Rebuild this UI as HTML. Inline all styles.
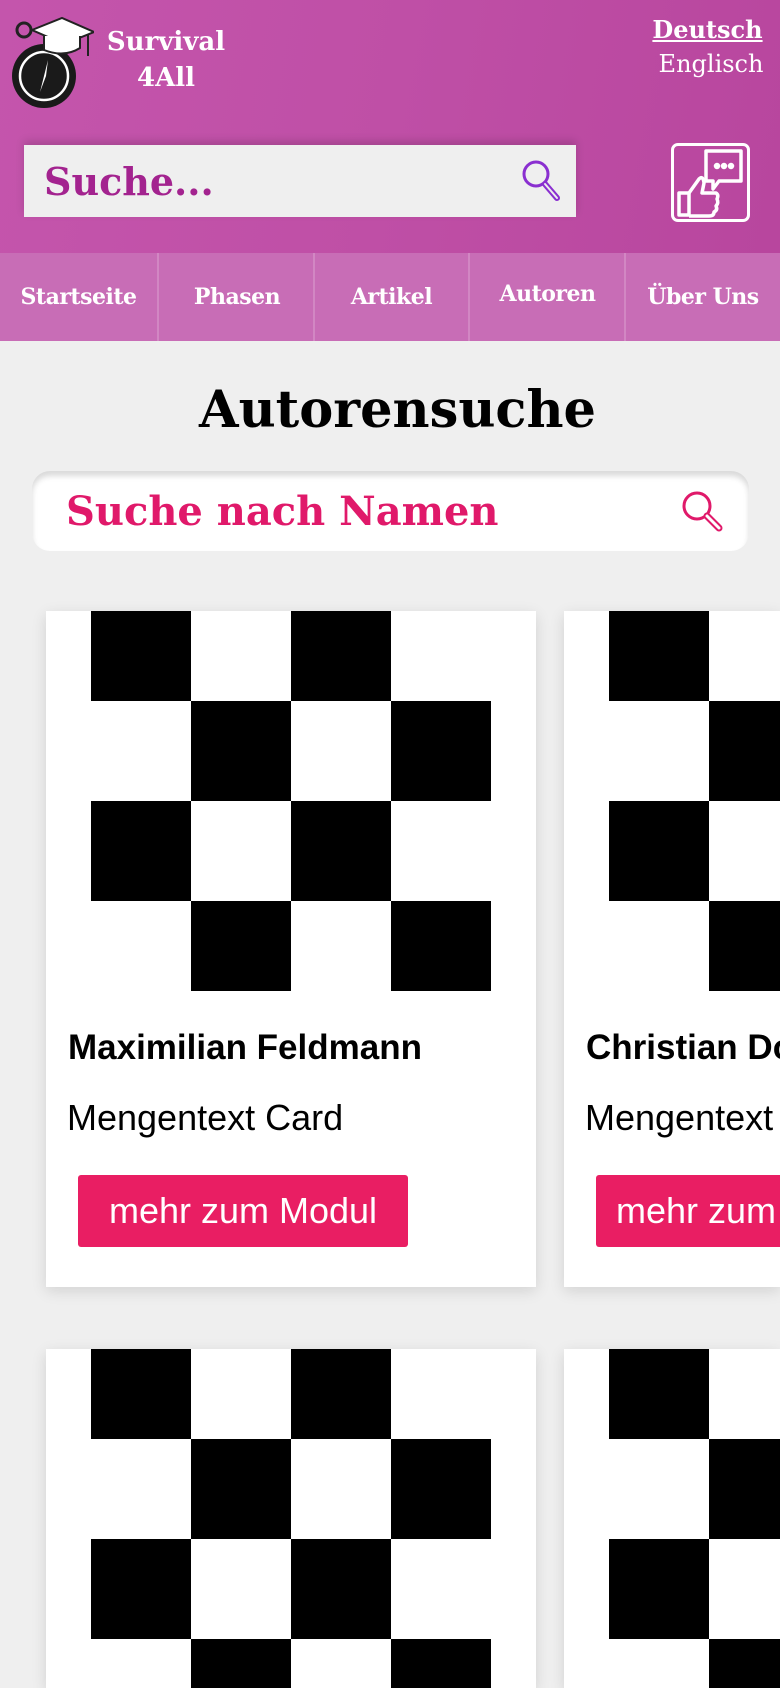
<!DOCTYPE html>
<html><head><meta charset="utf-8">
<style>
*{margin:0;padding:0;box-sizing:border-box}
html,body{width:780px;height:1688px;overflow:hidden}
body{background:#efefef;font-family:"Liberation Sans",sans-serif;position:relative}
.hdr{position:absolute;left:0;top:0;width:780px;height:253px;background:linear-gradient(100deg,#c455ac,#bf4fa6 50%,#b8469e)}
.nav{position:absolute;left:0;top:253px;width:780px;height:88px;background:#c86db6}
.nav div{position:absolute;top:0;height:88px;line-height:88px;color:#fff;font-family:"DejaVu Serif",serif;font-weight:bold;font-size:22px;text-align:center;letter-spacing:-0.5px}
.sep{position:absolute;top:253px;width:2px;height:88px;background:rgba(255,255,255,.18)}
.slab{font-family:"DejaVu Serif",serif;font-weight:bold}
.card{position:absolute;background:#fff;box-shadow:0 4px 14px rgba(0,0,0,.12);overflow:hidden}
.ck{position:absolute;background:#000}
</style></head><body>
<div class="hdr"></div>
<svg style="position:absolute;left:10px;top:16px" width="84" height="94" viewBox="0 0 84 94">
<circle cx="14" cy="14" r="7" fill="none" stroke="#222" stroke-width="3"/>
<circle cx="34" cy="60" r="32" fill="#1a1a1a"/>
<circle cx="34" cy="60" r="24" fill="none" stroke="#fff" stroke-width="2.5"/>
<path d="M38 44 L30 76 L36 60Z" fill="#fff"/>
<path d="M22 14 L52 2 L84 16 L54 28Z" fill="#fff" stroke="#222" stroke-width="2"/>
<path d="M34 20 L34 34 Q54 42 70 32 L70 20" fill="#fff" stroke="#222" stroke-width="2"/>
<path d="M78 18 L78 40" stroke="#222" stroke-width="2"/>
</svg>
<div class="slab" style="position:absolute;left:104px;top:24px;width:124px;text-align:center;color:#fff;font-size:26px;line-height:36px">Survival<br>4All</div>
<div class="slab" style="position:absolute;left:650px;top:14px;width:115px;text-align:center;color:#fff;font-size:24px;text-decoration:underline;line-height:32px">Deutsch</div>
<div class="slab" style="position:absolute;left:650px;top:48px;width:122px;text-align:center;color:#fff;font-size:24px;font-weight:normal;line-height:32px">Englisch</div>
<div style="position:absolute;left:24px;top:145px;width:552px;height:72px;background:#efefef;box-shadow:0 -4px 8px rgba(0,0,0,.15)"></div>
<div class="slab" style="position:absolute;left:44px;top:157px;color:#a3238f;font-size:38px;line-height:50px">Suche...</div>
<svg style="position:absolute;left:520px;top:158px" width="44" height="46" viewBox="0 0 44 46"><circle cx="16" cy="16" r="12" fill="none" stroke="#8a2fd0" stroke-width="3"/><path d="M25 26 L37 40" stroke="#8a2fd0" stroke-width="6" stroke-linecap="round"/><path d="M25 26 L37 40" stroke="#eee" stroke-width="2" stroke-linecap="round"/></svg>
<div style="position:absolute;left:671px;top:143px;width:79px;height:79px;border:3px solid #fff;border-radius:7px"></div>
<svg style="position:absolute;left:671px;top:143px" width="79" height="79" viewBox="0 0 79 79" fill="none" stroke="#fff" stroke-width="3.5" stroke-linejoin="round">
<path d="M35 8 H70 V38 H48 L42 46 V38 H35Z"/>
<circle cx="46" cy="23" r="1.5" fill="#fff"/><circle cx="53" cy="23" r="1.5" fill="#fff"/><circle cx="60" cy="23" r="1.5" fill="#fff"/>
<path d="M8 50 H18 V72 H8Z"/><path d="M18 50 L28 36 Q32 32 33 40 L31 50 H45 Q48 52 46 56 Q48 60 45 63 Q47 67 43 69 Q43 73 38 73 H18"/>
</svg>
<div class="nav">
<div style="left:0;width:157px">Startseite</div>
<div style="left:159px;width:156px">Phasen</div>
<div style="left:315px;width:153px">Artikel</div>
<div style="left:470px;width:155px;line-height:82px">Autoren</div>
<div style="left:626px;width:154px">Über Uns</div>
</div>
<div class="sep" style="left:157px"></div><div class="sep" style="left:313px"></div><div class="sep" style="left:468px"></div><div class="sep" style="left:624px"></div>
<div class="slab" style="position:absolute;left:0;top:377px;width:795px;text-align:center;font-size:51px;line-height:66px;color:#000">Autorensuche</div>
<div style="position:absolute;left:32px;top:471px;width:717px;height:80px;background:#fff;border-radius:18px;box-shadow:inset 0 5px 6px rgba(0,0,0,.15)"></div>
<div class="slab" style="position:absolute;left:66px;top:486px;color:#e0196a;font-size:40px;line-height:52px">Suche nach Namen</div>
<svg style="position:absolute;left:678px;top:488px" width="50" height="50" viewBox="0 0 50 50"><circle cx="19" cy="18" r="13" fill="none" stroke="#e0196a" stroke-width="3"/><path d="M29 28 L41 40" stroke="#e0196a" stroke-width="7" stroke-linecap="round"/><path d="M29 28 L41 40" stroke="#fff" stroke-width="3" stroke-linecap="round"/></svg>
<div class="card" style="left:46px;top:611px;width:490px;height:676px">
 <div class="ck" style="left:45px;top:0;width:100px;height:90px"></div>
 <div class="ck" style="left:245px;top:0;width:100px;height:90px"></div>
 <div class="ck" style="left:145px;top:90px;width:100px;height:100px"></div>
 <div class="ck" style="left:345px;top:90px;width:100px;height:100px"></div>
 <div class="ck" style="left:45px;top:190px;width:100px;height:100px"></div>
 <div class="ck" style="left:245px;top:190px;width:100px;height:100px"></div>
 <div class="ck" style="left:145px;top:290px;width:100px;height:90px"></div>
 <div class="ck" style="left:345px;top:290px;width:100px;height:90px"></div>
 <div style="position:absolute;left:22px;top:417px;font-weight:bold;font-size:35px;white-space:nowrap">Maximilian Feldmann</div>
 <div style="position:absolute;left:21px;top:486px;font-size:36px;white-space:nowrap">Mengentext Card</div>
 <div style="position:absolute;left:32px;top:564px;width:330px;height:72px;background:#e91e63;border-radius:3px;color:#fff;font-size:36px;line-height:72px;text-align:center">mehr zum Modul</div>
</div>
<div class="card" style="left:564px;top:611px;width:216px;height:676px">
 <div class="ck" style="left:45px;top:0;width:100px;height:90px"></div>
 <div class="ck" style="left:145px;top:90px;width:100px;height:100px"></div>
 <div class="ck" style="left:45px;top:190px;width:100px;height:100px"></div>
 <div class="ck" style="left:145px;top:290px;width:100px;height:90px"></div>
 <div style="position:absolute;left:22px;top:417px;font-weight:bold;font-size:35px;white-space:nowrap">Christian Do</div>
 <div style="position:absolute;left:21px;top:486px;font-size:36px;white-space:nowrap">Mengentext</div>
 <div style="position:absolute;left:32px;top:564px;width:330px;height:72px;background:#e91e63;border-radius:3px;color:#fff;font-size:36px;line-height:72px;padding-left:20px;white-space:nowrap">mehr zum Modul</div>
</div>
<div class="card" style="left:46px;top:1349px;width:490px;height:339px">
 <div class="ck" style="left:45px;top:0;width:100px;height:90px"></div>
 <div class="ck" style="left:245px;top:0;width:100px;height:90px"></div>
 <div class="ck" style="left:145px;top:90px;width:100px;height:100px"></div>
 <div class="ck" style="left:345px;top:90px;width:100px;height:100px"></div>
 <div class="ck" style="left:45px;top:190px;width:100px;height:100px"></div>
 <div class="ck" style="left:245px;top:190px;width:100px;height:100px"></div>
 <div class="ck" style="left:145px;top:290px;width:100px;height:49px"></div>
 <div class="ck" style="left:345px;top:290px;width:100px;height:49px"></div>
</div>
<div class="card" style="left:564px;top:1349px;width:216px;height:339px">
 <div class="ck" style="left:45px;top:0;width:100px;height:90px"></div>
 <div class="ck" style="left:145px;top:90px;width:100px;height:100px"></div>
 <div class="ck" style="left:45px;top:190px;width:100px;height:100px"></div>
 <div class="ck" style="left:145px;top:290px;width:100px;height:49px"></div>
</div>
</body></html>
